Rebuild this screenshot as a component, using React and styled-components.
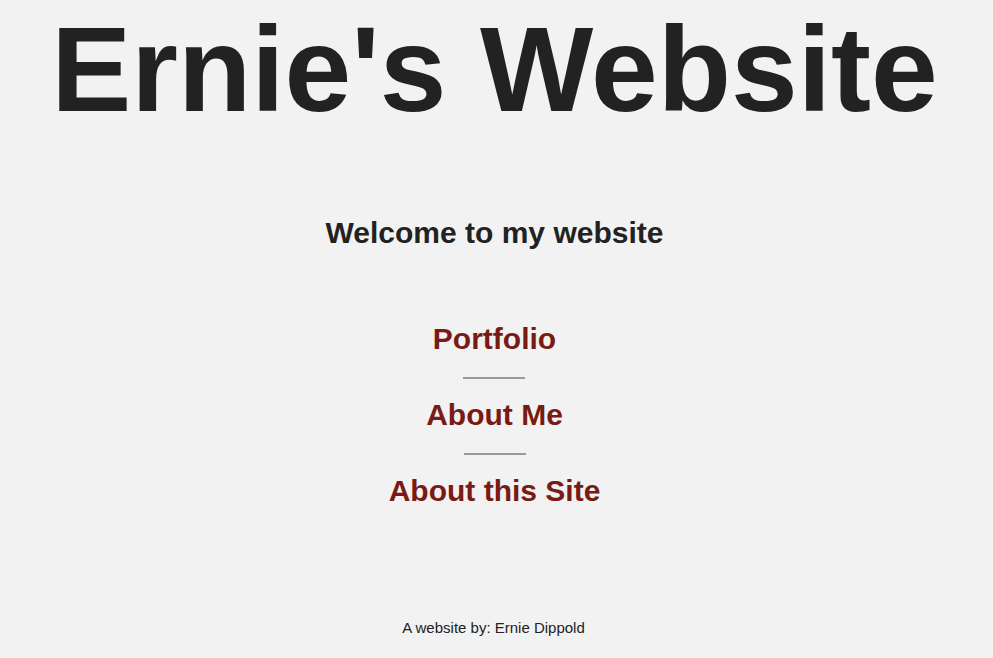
import styled, { createGlobalStyle } from "styled-components";

const GlobalStyle = createGlobalStyle`
  html, body {
    margin: 0;
    padding: 0;
    background-color: #f2f2f2;
  }
  body {
    font-family: "Liberation Sans", Arial, sans-serif;
    color: #222222;
  }
`;

const links = ["Portfolio", "About Me", "About this Site"];

export default function App() {
  return (
    <>
      <GlobalStyle />
      <Page>
        <Title>Ernie's Website</Title>
        <Welcome>Welcome to my website</Welcome>
        <Nav>
          {links.map((label, i) => (
            <NavItem key={label}>
              {i > 0 && <Divider />}
              <NavLink href="#">{label}</NavLink>
            </NavItem>
          ))}
        </Nav>
        <Footer>A website by: Ernie Dippold</Footer>
      </Page>
    </>
  );
}

const Page = styled.div`
  display: flex;
  flex-direction: column;
  align-items: center;
  width: 100%;
  height: 658px;
`;

const Title = styled.h1`
  margin: 9px 0 0 -4px;
  font-size: 120px;
  line-height: 120px;
  font-weight: 700;
  color: #222222;
`;

const Welcome = styled.h2`
  margin: 87px 0 0 -4px;
  font-size: 30px;
  line-height: 34px;
  font-weight: 700;
  color: #222222;
`;

const Nav = styled.nav`
  display: flex;
  flex-direction: column;
  align-items: center;
  margin: 72px 0 0 -4px;
`;

const NavItem = styled.div`
  display: flex;
  flex-direction: column;
  align-items: center;
`;

const Divider = styled.hr`
  width: 62px;
  height: 0;
  margin: 21px 0 19px 0;
  border: none;
  border-top: 2px solid #999999;
`;

const NavLink = styled.a`
  font-size: 30px;
  line-height: 34px;
  font-weight: 700;
  color: #7a1a14;
  text-decoration: none;
`;

const Footer = styled.footer`
  margin: auto 0 22px -6px;
  font-size: 15px;
  line-height: 16px;
  color: #222222;
`;
